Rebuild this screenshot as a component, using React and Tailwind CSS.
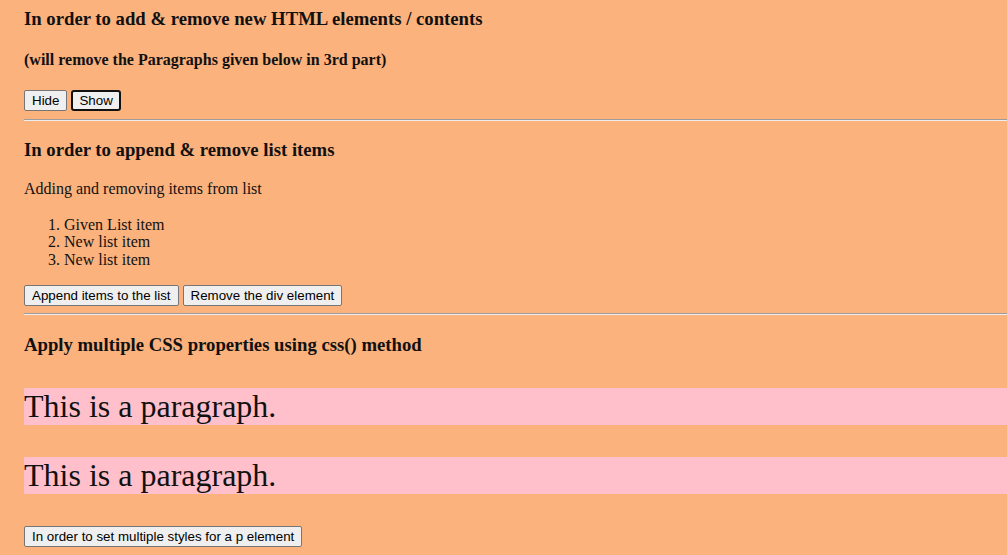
export default function App() {
  const btn =
    "h-[21px] px-[7px] border border-[#767676] rounded-[2px] bg-[#efefef] text-[13.33px] leading-[15px] text-black font-['Liberation_Sans',Arial,sans-serif]";
  return (
    <div className="min-h-[555px] bg-[#fcb27d] pl-6 pt-2 font-['Liberation_Serif','Times_New_Roman',serif] text-[#111] overflow-hidden">
      <h3 className="text-[18.72px] font-bold leading-[22px]">
        In order to add &amp; remove new HTML elements / contents
      </h3>
      <h4 className="mt-[20.5px] text-[16px] font-bold leading-[18.4px]">
        (will remove the Paragraphs given below in 3rd part)
      </h4>
      <div className="mt-[21px] flex gap-[4px]">
        <button className={btn}>Hide</button>
        <button className="h-[21px] px-[6px] border-2 border-[#111] rounded-[3px] bg-[#efefef] text-[13.33px] leading-[15px] text-black font-['Liberation_Sans',Arial,sans-serif]">
          Show
        </button>
      </div>
      <hr className="mt-2 h-0 border-0 border-t border-t-[#9c9c9c] border-b border-b-[#eeeeee]" />

      <h3 className="mt-[18.5px] text-[18.72px] font-bold leading-[22px]">
        In order to append &amp; remove list items
      </h3>
      <p className="mt-[19px] text-[16px] leading-[18.4px]">Adding and removing items from list</p>
      <ol className="mt-[17px] list-decimal pl-10 text-[16px] leading-[17.6px]">
        <li>Given List item</li>
        <li>New list item</li>
        <li>New list item</li>
      </ol>
      <div className="mt-4 flex gap-[4px]">
        <button className={btn}>Append items to the list</button>
        <button className={btn}>Remove the div element</button>
      </div>
      <hr className="mt-[7px] h-0 border-0 border-t border-t-[#9c9c9c] border-b border-b-[#eeeeee]" />

      <h3 className="mt-[19px] text-[18.72px] font-bold leading-[22px]">
        Apply multiple CSS properties using css() method
      </h3>
      <p className="mt-8 bg-[#ffc0cb] text-[32px] leading-[37px]">This is a paragraph.</p>
      <p className="mt-8 bg-[#ffc0cb] text-[32px] leading-[37px]">This is a paragraph.</p>
      <div className="mt-8 flex">
        <button className={btn}>In order to set multiple styles for a p element</button>
      </div>
    </div>
  );
}
